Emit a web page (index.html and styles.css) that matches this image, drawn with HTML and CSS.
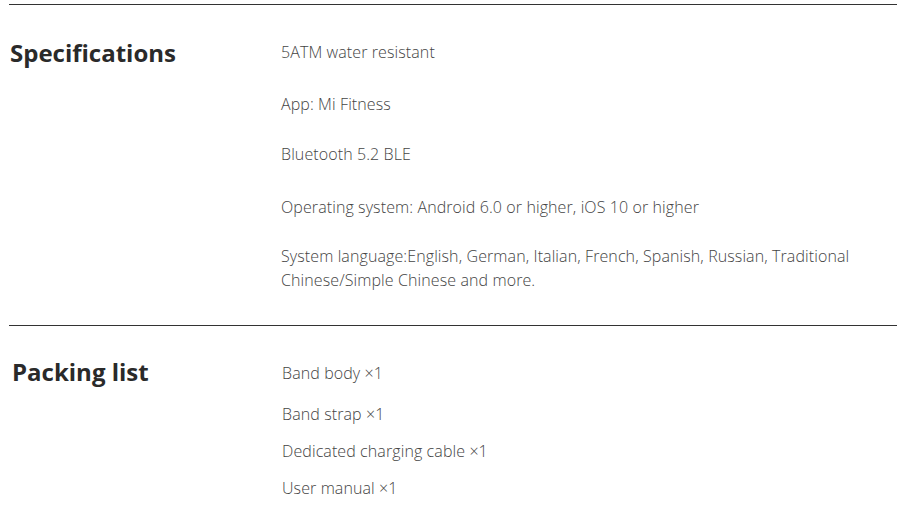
FILE: index.html
```html
<!DOCTYPE html>
<html>
<head>
<meta charset="utf-8">
<link rel="stylesheet" href="styles.css">
</head>
<body>
<div class="page">
  <section class="block specs">
    <h2 class="title">Specifications</h2>
    <ul class="list">
      <li class="item i1">5ATM water resistant</li>
      <li class="item i2">App: Mi Fitness</li>
      <li class="item i3">Bluetooth 5.2 BLE</li>
      <li class="item i4">Operating system: Android 6.0 or higher, iOS 10 or higher</li>
      <li class="item i5">System language:English, German, Italian, French, Spanish, Russian, Traditional Chinese/Simple Chinese and more.</li>
    </ul>
  </section>
  <section class="block packing">
    <h2 class="title title-pack">Packing list</h2>
    <ul class="list list-pack">
      <li class="item p1">Band body ×1</li>
      <li class="item p2">Band strap ×1</li>
      <li class="item p3">Dedicated charging cable ×1</li>
      <li class="item p4">User manual ×1</li>
    </ul>
  </section>
</div>
</body>
</html>
```
FILE: styles.css
```css
html, body {
  margin: 0;
  padding: 0;
  background: #fff;
}
.page {
  padding: 4px 8px 0 9px;
  width: 888px;
  font-family: "Open Sans", "Noto Sans", sans-serif;
}
.block {
  display: flex;
  border-top: 1px solid #333;
}
.title {
  margin: 0;
  width: 271px;
  flex: none;
  font-size: 24px;
  font-weight: 700;
  color: #2a2a2a;
  line-height: 32px;
  padding-left: 1px;
}
.title-pack {
  padding-left: 3px;
  width: 269px;
}
.specs .title { margin-top: 32px; }
.packing .title { margin-top: 30px; }
.list {
  list-style: none;
  margin: 0;
  padding: 0;
  width: 590px;
}
.list-pack {
  padding-left: 1px;
}
.item {
  font-size: 16px;
  line-height: 24px;
  color: #444;
  font-weight: 300;
  letter-spacing: 0.1px;
}
.specs .list { padding-bottom: 33px; }
.i1 { margin-top: 35px; }
.i2 { margin-top: 28px; }
.i3 { margin-top: 26px; }
.i4 { margin-top: 29px; }
.i5 { margin-top: 25px; }
.p1 { margin-top: 35px; }
.p2 { margin-top: 17px; }
.p3 { margin-top: 13px; }
.p4 { margin-top: 13px; }
```
